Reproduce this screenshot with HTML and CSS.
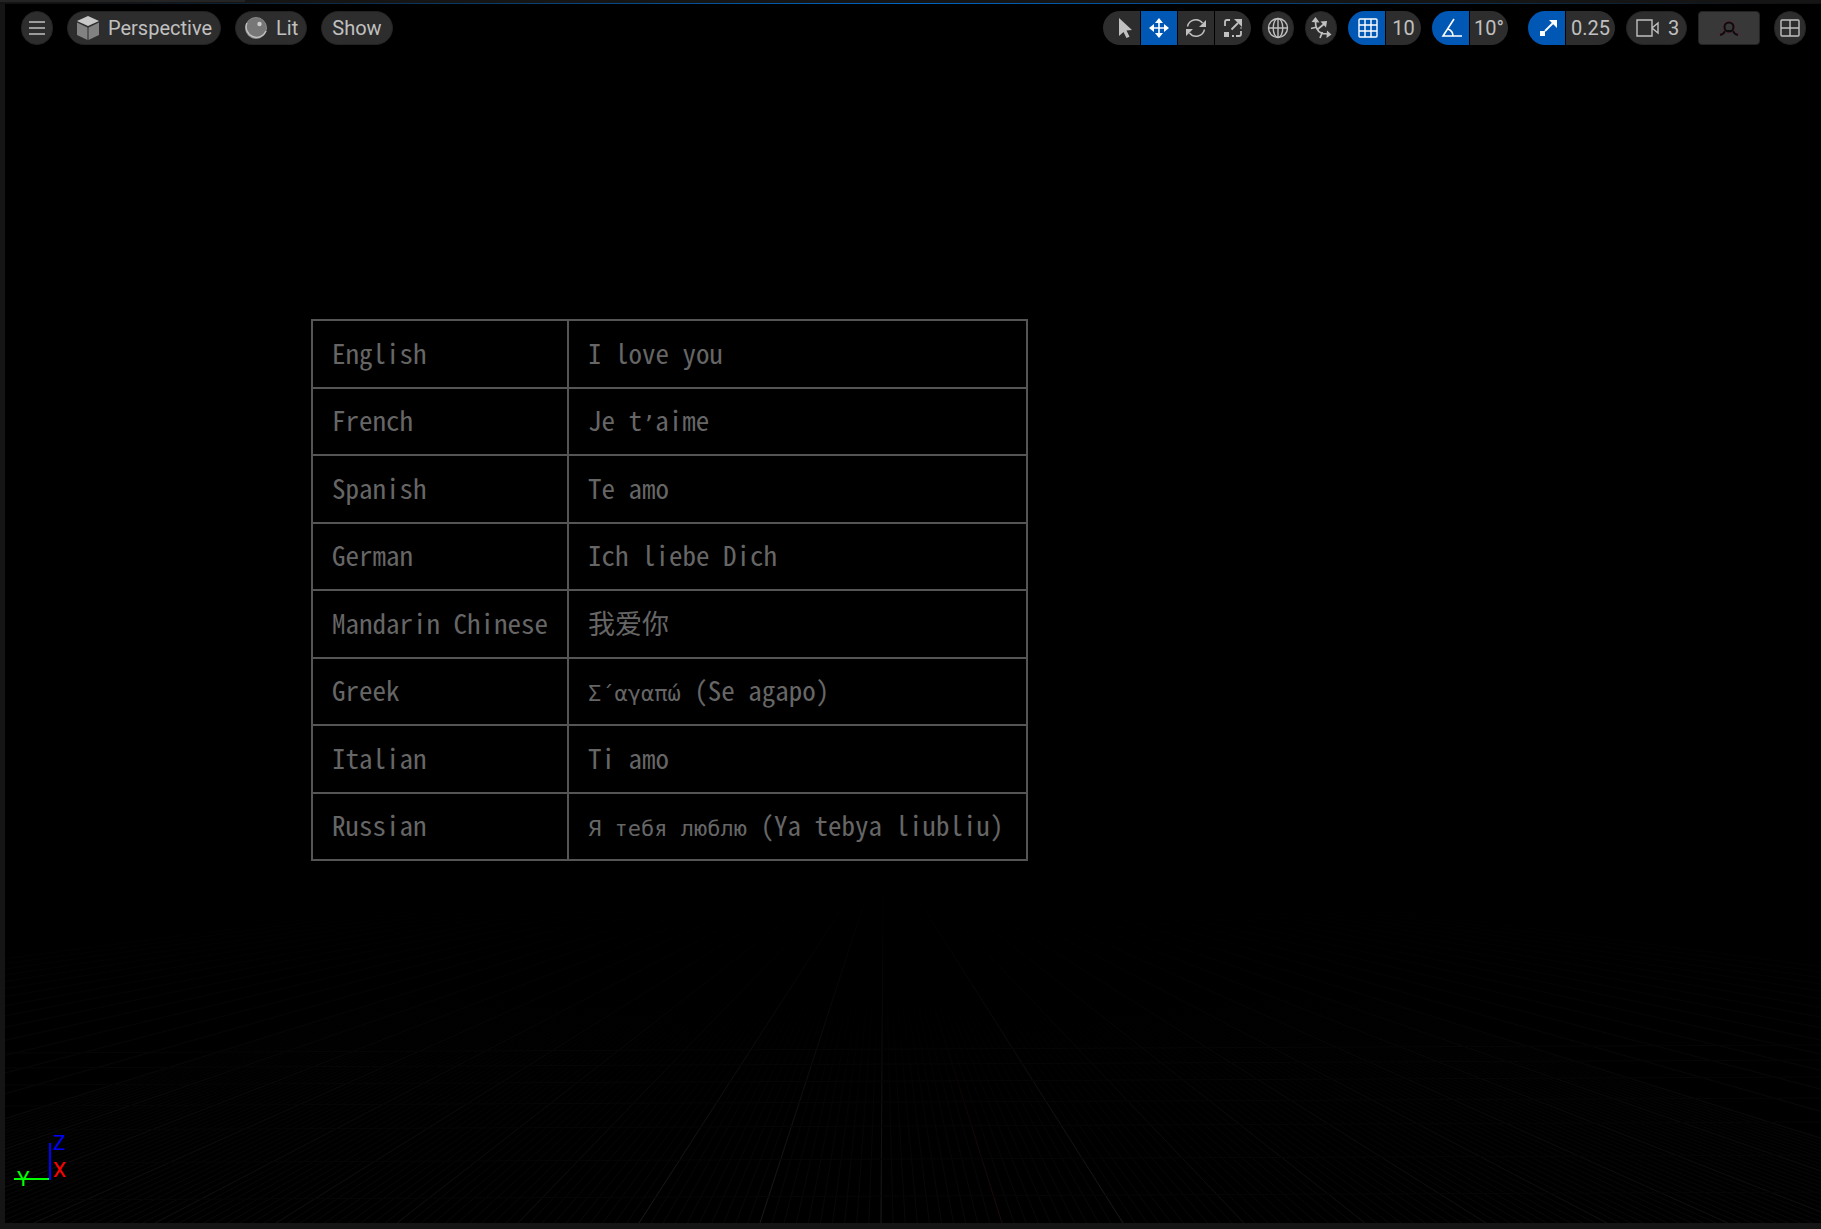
FILE: index.html
```html
<!DOCTYPE html>
<html lang="en">
<head>
<meta charset="utf-8">
<title>Viewport</title>
<link rel="stylesheet" href="styles.css">
</head>
<body>
<div class="tabstrip"><span class="tab"></span></div>
<div class="glow"></div>
<main class="viewport">
  <svg class="floor" id="floor" viewBox="0 0 1816 360" preserveAspectRatio="none" aria-hidden="true"></svg>
  <header class="toolbar">
    <div class="tools">
      <button class="pill round" aria-label="Viewport options"><svg width="18" height="16" viewBox="0 0 18 16"><path d="M1 2h16M1 8h16M1 14h16" stroke="currentColor" stroke-width="1.4"/></svg></button>
      <button class="pill"><svg width="24" height="26" viewBox="0 0 24 26"><path d="M12 1 23 6 12 11 1 6z" fill="#c8c8c8"/><path d="M1 7.500 11.500 12.500V25L1 20zM23 7.500 12.500 12.500V25L23 20z" fill="#828282"/></svg>Perspective</button>
      <button class="pill lit"><svg width="24" height="24" viewBox="0 0 24 24"><circle cx="12" cy="12" r="10.500" fill="#777" stroke="#8a8a8a"/><path d="M3 7A10.300 10.300 0 1 0 22 15" fill="none" stroke="#c0c0c0" stroke-width="1.400"/><circle cx="15.500" cy="8" r="2.200" fill="#ccc"/></svg>Lit</button>
      <button class="pill text">Show</button>
    </div>
    <div class="tools right">
      <div class="group modes">
        <button class="seg" aria-label="Select"><svg width="24" height="24" viewBox="0 0 24 24"><path d="M8 2v18l4.500-4 3 6 3-1.300-3-6.200 5.500-.5z" fill="currentColor"/></svg></button>
        <button class="seg on" aria-label="Move"><svg width="22" height="22" viewBox="0 0 22 22"><path d="M11 3v16M3 11h16" stroke="currentColor" stroke-width="1.600"/><path d="m11 1 4 5H7zM11 21l4-5H7zM1 11l5-4v8zM21 11l-5-4v8z" fill="currentColor"/></svg></button>
        <button class="seg" aria-label="Rotate"><svg width="22" height="22" viewBox="0 0 22 22"><path d="M2.500 9.500A8.500 8.500 0 0 1 17.500 6M19.500 12.500A8.500 8.500 0 0 1 4.500 16" fill="none" stroke="currentColor" stroke-width="1.400"/><path d="M21 3v7h-7zM1 19v-7h7z" fill="currentColor"/></svg></button>
        <button class="seg" aria-label="Scale"><svg width="20" height="20" viewBox="0 0 20 20"><path d="M2 8V4q0-2 2-2h3M13 18h3q2 0 2-2v-3M9 18h2M18 9.500v1M8.500 11.500 15 5" fill="none" stroke="currentColor" stroke-width="1.800"/><path d="M11 1h8v8zM1 14h5v5H1z" fill="currentColor"/></svg></button>
      </div>
      <button class="pill round" aria-label="World space"><svg width="22" height="22" viewBox="0 0 22 22" fill="none" stroke="currentColor" stroke-width="1.400"><circle cx="11" cy="11" r="9.500"/><ellipse cx="11" cy="11" rx="4.800" ry="9.500"/><path d="M11 1.500v19M1.500 11h19"/></svg></button>
      <button class="pill round" aria-label="Surface snapping"><svg width="22" height="22" viewBox="0 0 22 22"><path d="M5.500 3Q5 14 12 16.500l7 .5M8 12l6-5M1 11.500l6-1.500M10 21l2.500-6" fill="none" stroke="currentColor" stroke-width="1.700"/><path d="m5.500 0 4 5.500-8-.5zM21.500 17.500l-5 3.500.5-7.500zM17 4l-6.500.5 5.500 6z" fill="currentColor"/></svg></button>
      <div class="group">
        <button class="seg on" aria-label="Grid snap"><svg width="20" height="20" viewBox="0 0 20 20" fill="none" stroke="currentColor" stroke-width="1.400"><rect x="1" y="1" width="18" height="18" rx="1"/><path d="M7 1v18M13 1v18M1 7h18M1 13h18"/></svg></button>
        <button class="seg value">10</button>
      </div>
      <div class="group wide">
        <button class="seg on" aria-label="Rotation snap"><svg width="22" height="20" viewBox="0 0 22 20" fill="none" stroke="currentColor" stroke-width="1.600"><path d="M13 1 2 18h19M7 11q5 2 5 7"/></svg></button>
        <button class="seg value degrees">10°</button>
      </div>
      <div class="group">
        <button class="seg on" aria-label="Scale snap"><svg width="20" height="20" viewBox="0 0 20 20"><path d="m7 13 8-8" stroke="currentColor" stroke-width="1.800"/><path d="M11 2h8v8zM2 13h5v5H2z" fill="currentColor"/></svg></button>
        <button class="seg value factor">0.25</button>
      </div>
      <button class="pill camera"><svg width="24" height="18" viewBox="0 0 24 18" fill="none" stroke="currentColor" stroke-width="1.400"><path d="M1 1h15v16H1zM16 9l6-5v10z"/></svg>3</button>
      <button class="preview" aria-label="Preview"><svg width="24" height="16" viewBox="0 0 24 16" fill="none"><path d="M1 15q5-1 6-4h10q1 3 6 4" stroke="#6a1f42"/><path d="M3 15q4-1 5-4h8q1 3 5 4" stroke="#0c0c0c" stroke-width="2"/><circle cx="12" cy="7" r="5.500" stroke="#6a1f42"/><circle cx="12" cy="7" r="4.500" stroke="#0c0c0c" stroke-width="2"/></svg></button>
      <button class="pill round layout" aria-label="Layout"><svg width="20" height="18" viewBox="0 0 20 18" fill="none" stroke="currentColor" stroke-width="1.400"><rect x="1" y="1" width="18" height="16" rx="1"/><path d="M10 1v16M1 9h18"/></svg></button>
    </div>
  </header>
  <table class="phrases">
    <tbody>
    <tr><th scope="row">English</th><td>I love you</td></tr>
    <tr><th scope="row">French</th><td>Je t<span class="alt">’</span>aime</td></tr>
    <tr><th scope="row">Spanish</th><td>Te amo</td></tr>
    <tr><th scope="row">German</th><td>Ich liebe Dich</td></tr>
    <tr><th scope="row">Mandarin Chinese</th><td lang="zh-CN">我爱你</td></tr>
    <tr><th scope="row">Greek</th><td><span class="alt" lang="el">Σ΄αγαπώ</span> (Se agapo)</td></tr>
    <tr><th scope="row">Italian</th><td>Ti amo</td></tr>
    <tr><th scope="row">Russian</th><td><span class="alt" lang="ru">Я тебя люблю</span> (Ya tebya liubliu)</td></tr>
    </tbody>
  </table>
  <svg class="axes" width="56" height="56" viewBox="0 0 56 56" role="img" aria-label="Axes">
    <path d="M0 45h36" stroke="#0f0" stroke-width="2"/><path d="M36 9v37" stroke="#00f" stroke-width="2"/>
    <text x="39" y="16" fill="#00f">Z</text><text x="39" y="43" fill="#f00">X</text><text x="3" y="52" fill="#0f0">Y</text>
  </svg>
</main>
<script src="floor.js"></script>
</body>
</html>
```
FILE: styles.css
```css
* { box-sizing: border-box; }
body {
  margin: 0;
  min-height: 100vh;
  display: flex;
  flex-direction: column;
  background: #151515;
  color: #c0c0c0;
  font: 20px/24px Roboto, "Liberation Sans", sans-serif;
}
.tabstrip { height: 3px; background: #151515; }
.tab { display: block; width: 245px; height: 2px; background: #242424; }
.glow { height: 1px; background: linear-gradient(90deg, #111 4%, #0066c4 50%, #111 98%); }
.viewport {
  position: relative;
  flex: 1;
  margin: 0 0 6px 5px;
  background: #000;
}
.floor { position: absolute; left: 0; bottom: 0; width: 100%; height: 360px; }
.toolbar {
  position: relative;
  display: flex;
  justify-content: space-between;
  padding: 7px 15px 0 16px;
}
.tools { display: flex; gap: 14px; }
.tools.right { gap: 11px; }
button {
  display: flex;
  align-items: center;
  justify-content: center;
  height: 34px;
  margin: 0;
  padding: 0;
  border: 1px solid #232323;
  background: #2d2d2d;
  color: inherit;
  font: inherit;
}
svg { flex: none; display: block; }
.pill { border-radius: 17px; padding: 0 8px; gap: 8px; }
.round { width: 32px; padding: 0; }
.text { padding: 0 10px; }
.camera { width: 61px; padding: 0 8px 0 10px; }
.group { display: flex; gap: 1px; }
.seg { width: 36px; border: 0; }
.seg:first-child { width: 37px; padding-left: 2px; border-radius: 17px 0 0 17px; }
.seg:last-child { border-radius: 0 17px 17px 0; }
.seg.on { background: #0058b4; color: #fff; }
.seg.value { width: 35px; }
.seg.degrees { width: 38px; }
.seg.factor { width: 49px; }
.wide { margin-right: 9px; }
.preview { width: 62px; border-radius: 4px; background: #383838; }
.layout { margin-left: 3px; }
.phrases {
  position: relative;
  width: 717px;
  height: 542px;
  margin: 274px 0 0 306px;
  border-collapse: collapse;
  color: #666;
  font: 27px/36px "Noto Sans Mono CJK SC", "Liberation Mono", "Noto Sans CJK SC", monospace;
}
.phrases th, .phrases td {
  padding: 0 18px 2px 19px;
  border: 2px solid #555;
  font-weight: 300;
  text-align: left;
  white-space: nowrap;
}
.phrases th { width: 256px; }
.alt { font-family: "DejaVu Sans Mono", "Liberation Mono", monospace; font-size: 22px; line-height: 20px; }
.axes {
  position: absolute;
  left: 9px;
  bottom: 33px;
  overflow: visible;
  font: 21px Roboto, sans-serif;
}
```
FILE: floor.js
```js
// Perspective floor grid: rays from a vanishing point, and receding rows.
const floor = document.getElementById("floor");
const add = (x1, y1, x2, y2, stroke) => {
  const line = document.createElementNS("http://www.w3.org/2000/svg", "line");
  Object.entries({ x1, y1, x2, y2, stroke }).forEach(([k, v]) => line.setAttribute(k, v));
  floor.append(line);
};
const fade = (id, start, color) =>
  `<linearGradient id="${id}" gradientUnits="userSpaceOnUse" x1="0" y1="${start}" x2="0" y2="360"><stop offset="0" stop-color="#000"/><stop offset="1" stop-color="${color}"/></linearGradient>`;
floor.innerHTML = `<defs>${fade("near", 20, "#181818")}${fade("far", 30, "#0e0e0e")}${fade("faint", 120, "#090909")}${fade("axis", 120, "#1c0809")}</defs>`;
for (let i = -100; i <= 100; i++) add(878 + i * 0.6, 0, 876 + i * 12.1, 360, "url(#faint)");
for (let i = -24; i <= 24; i++) {
  const tone = i === 1 ? "axis" : Math.abs(i) < 3 ? "near" : "far";
  add(878 + i * 15.600, 30, 876 + i * 121, 360, `url(#${tone})`);
}
for (const y of [190, 205, 222, 243, 267, 300, 337]) add(0, y, 1816, y - 8, "#060606");
```
